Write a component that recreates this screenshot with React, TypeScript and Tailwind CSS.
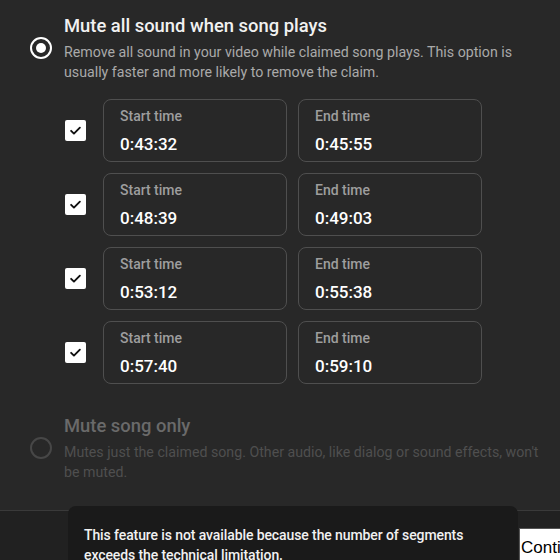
import React from 'react';

// Segment rows shown in the "mute all sound" option
const segments = [
  { start: '0:43:32', end: '0:45:55' },
  { start: '0:48:39', end: '0:49:03' },
  { start: '0:53:12', end: '0:55:38' },
  { start: '0:57:40', end: '0:59:10' },
];

function Radio({ checked }: { checked: boolean }) {
  return checked ? (
    <div className="w-[22px] h-[22px] rounded-full border-[2.5px] border-white flex items-center justify-center shrink-0">
      <div className="w-[10px] h-[10px] rounded-full bg-white" />
    </div>
  ) : (
    <div className="w-[22px] h-[22px] rounded-full border-2 border-[#474747] shrink-0" />
  );
}

function Checkbox() {
  return (
    <div className="w-[21px] h-[21px] rounded-[2px] bg-white flex items-center justify-center shrink-0">
      <svg width="15" height="15" viewBox="0 0 24 24" fill="none" stroke="#0f0f0f" strokeWidth="3" strokeLinecap="round" strokeLinejoin="round">
        <path d="M5 12.5l4.5 4.5L19 7.5" />
      </svg>
    </div>
  );
}

function TimeField({ label, value }: { label: string; value: string }) {
  return (
    <div className="w-[184px] h-[63px] rounded-lg border border-[#4f4f4f] pl-4 pt-[6px]">
      <div className="text-[14px] leading-5 font-medium text-[#9e9e9e]">{label}</div>
      <div className="mt-[6px] text-[17px] leading-6 font-medium text-white">{value}</div>
    </div>
  );
}

export default function App() {
  return (
    <div className="w-[560px] h-[560px] overflow-hidden relative bg-[#282828] font-['Roboto',sans-serif]">
      {/* Option 1 */}
      <div className="flex items-center gap-3 pl-[30px] pt-[14px]">
        <Radio checked />
        <div>
          <div className="text-[18.4px] leading-6 font-medium text-[#f1f1f1]">Mute all sound when song plays</div>
          <div className="mt-1 text-[14.2px] leading-5 text-[#aaaaaa] w-[470px]">
            Remove all sound in your video while claimed song plays. This option is usually faster and more likely to remove the claim.
          </div>
        </div>
      </div>

      <div className="flex flex-col gap-[11px] pl-[65px] mt-[17px]">
        {segments.map((s) => (
          <div key={s.start} className="flex items-center">
            <Checkbox />
            <div className="flex gap-[11px] ml-[17px]">
              <TimeField label="Start time" value={s.start} />
              <TimeField label="End time" value={s.end} />
            </div>
          </div>
        ))}
      </div>

      {/* Option 2 (disabled) */}
      <div className="flex items-center gap-3 pl-[30px] mt-[30px]">
        <Radio checked={false} />
        <div>
          <div className="text-[18.4px] leading-6 font-medium text-[#6a6a6a]">Mute song only</div>
          <div className="mt-1 text-[14.2px] leading-5 text-[#4f4f4f] w-[480px]">
            Mutes just the claimed song. Other audio, like dialog or sound effects, won't be muted.
          </div>
        </div>
      </div>

      {/* Footer */}
      <div className="mt-[28px] border-t border-[#3a3a3a] bg-[#212121] h-[60px] pl-[519px] pt-[17px]">
        <button className="bg-white border border-[#555] h-[40px] pl-[1px] pr-3 text-[17px] text-black font-['Liberation_Sans',Arial,sans-serif] whitespace-nowrap">
          Continue
        </button>
      </div>

      {/* Tooltip overlay */}
      <div className="absolute left-[68px] top-[506px] w-[450px] h-[80px] rounded-lg bg-[#1a1a1a] pl-4 pr-4 pt-[19px]">
        <div className="text-[14px] leading-5 text-[#f1f1f1] font-medium tracking-[-0.1px]">
          This feature is not available because the number of segments exceeds the technical limitation.
        </div>
      </div>
    </div>
  );
}
